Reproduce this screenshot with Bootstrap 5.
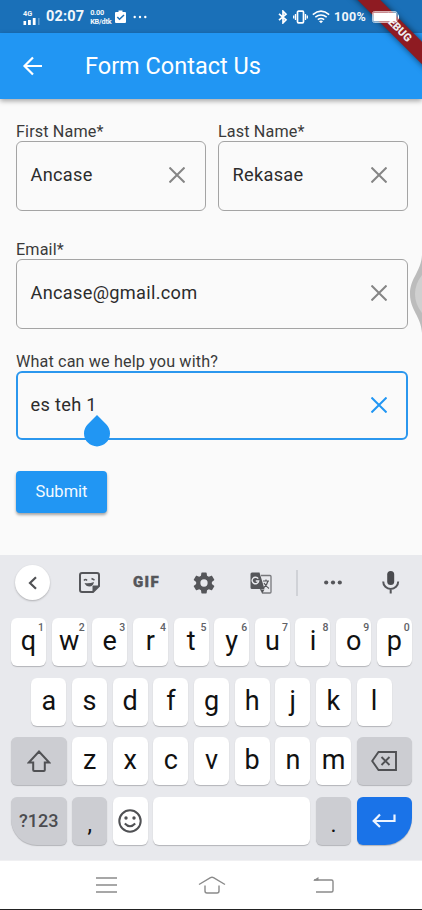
<!DOCTYPE html>
<html lang="en">
<head>
<meta charset="utf-8">
<meta name="viewport" content="width=device-width, initial-scale=1">
<title>Form Contact Us</title>
<link href="https://cdn.jsdelivr.net/npm/bootstrap@5.3.0/dist/css/bootstrap.min.css" rel="stylesheet">
<style>
html,body{height:100%}
body{font-family:Roboto,"Liberation Sans",sans-serif;background:#fafafa;color:#303030;overflow:hidden}
svg{display:block;flex:none}
.phone{width:422px;height:910px}
.status{height:33px;background:#1a70b8;color:#f2f7fb;padding-left:23px}
.status-icons{z-index:3;padding-right:22px}
.tiny{font-size:7.3px;line-height:9px;font-weight:700}
.signal{width:17px}
.speed{width:24px;margin-left:6px;white-space:nowrap;letter-spacing:-.2px}
.clock{font-size:14.5px;font-weight:700;line-height:17px;letter-spacing:.15px;margin-left:6px}
.pct{font-size:12.5px;font-weight:700;letter-spacing:.3px;width:38px;white-space:nowrap;padding-top:1px}
.ribbon-clip{top:0;right:0;width:90px;height:90px;z-index:2;pointer-events:none}
.ribbon{width:150px;height:16px;left:-9px;top:20.5px;transform:rotate(45deg);background:#8e1b22;color:#eee;font-size:11px;line-height:16px;font-weight:900;box-shadow:0 0 6px rgba(0,0,0,.6);padding-right:3px}
.appbar{height:66px;background:#2196f3;color:#fff;padding-left:21px;box-shadow:0 2px 5px rgba(0,0,0,.35);z-index:1}
.appbar-title{font-size:23.5px;line-height:28px;margin-left:40px;font-weight:400}
.form-area{height:456px;padding:24px 14px 0 16px}
.half{flex:1 1 0}
.name-row{gap:12px}
.flabel{font-size:16.2px;letter-spacing:.13px;line-height:18px;height:18px;color:#3a3a3a;white-space:nowrap}
.gap-email{margin-top:30px}
.gap-help{margin-top:24px}
.field{height:70px;border:1px solid #a4a4a4;border-radius:6px;padding:0 20px 2px 13.5px;font-size:18.2px;letter-spacing:.3px;color:#2c2c2c}
.field svg{stroke:#858585}
.field.active-field{border:2px solid #2b97ee;padding:0 19px 2px 12.5px;height:69px}
.active-field svg{stroke:#2196f3}
.drop{left:65.5px;top:42px}
.btn-send{width:91px;height:42px;margin-top:31px;background:#2196f3;color:#f4faff;font-size:16.5px;font-weight:400;border-radius:4px;box-shadow:0 2px 3px rgba(0,0,0,.35);border:0}
.edge{right:0;top:255px;z-index:2}
.keyboard{height:305px;background:#e8e9ed;padding:0 10px 0 11px}
.tools{height:55px;margin-bottom:8px}
.back-circle{width:35px;height:35px;box-shadow:0 1px 2px rgba(0,0,0,.25)}
.gif{font-size:15px;font-weight:900;color:#55565a;letter-spacing:1.4px;-webkit-text-stroke:.4px #55565a;margin-left:33px;width:29px}
.keys{gap:5.65px;height:48px;margin-bottom:11.6px}
.key{width:35px;height:48px;background:#fff;border-radius:6px;color:#111;font-size:27px;line-height:47px;box-shadow:0 1px 1px #b3b4b8;flex:none}
.key sup{position:absolute;right:2px;top:4px;font-size:10.5px;line-height:11px;font-weight:500;color:#606166}
.key-gray{background:#cccdd2}
.key-mod{width:55.5px}
.key-sym{border-bottom-left-radius:26px;font-size:18px;color:#4b4c50;font-weight:500}
.key-dot{font-size:23px}
.key-enter{background:#1a73e8;border-bottom-right-radius:27px}
.key-space{width:157px}
.navkeys{height:50px;background:#fff;border-bottom:1px solid #222;border-top:1px solid #f0f0f2}
</style>
</head>
<body>
<div class="phone d-flex flex-column position-relative overflow-hidden">
  <div class="status d-flex align-items-center justify-content-between">
    <div class="d-flex align-items-center">
      <div class="signal d-flex flex-column"><span class="tiny">4G</span>
        <svg width="17" height="7" fill="#fff"><rect x=".5" y="3" width="2.6" height="4"/><rect x="5" y="2" width="2.8" height="5"/><rect x="9.8" width="2.8" height="7"/><rect x="15" width="1.6" height="7" opacity=".3"/></svg>
      </div>
      <span class="clock pt-1 pb-1">02:07</span>
      <span class="tiny d-flex flex-column speed"><span>0.00</span><span>KB/dtk</span></span>
      <svg style="margin-left:1px" width="11" height="14" viewBox="0 0 11 14"><path fill="#fff" d="M1 2h2.500V.5h4V2H10q1 0 1 1v9q0 1-1 1H1q-1 0-1-1V3q0-1 1-1z"/><path d="M2.300 7l2.200 2.300L9 5" fill="none" stroke="#1a70b8" stroke-width="1.500"/></svg>
      <svg style="margin-left:7px" width="14" height="4" fill="#fff"><circle cx="1.700" cy="2" r="1.200"/><circle cx="7" cy="2" r="1.200"/><circle cx="12.300" cy="2" r="1.200"/></svg>
    </div>
    <div class="status-icons d-flex align-items-center position-relative">
      <svg width="10" height="14" viewBox="0 0 10 14" fill="none" stroke="#fff" stroke-width="1.700"><path d="M1 3.800l7 6L5 12.800V1.200l3 3-7 6"/></svg>
      <svg style="margin-left:5px" width="15" height="14" viewBox="0 0 15 14" fill="none" stroke="#fff" stroke-width="1.300"><rect x="4.500" y="1.200" width="6" height="11.600" rx="1" stroke-width="1.700"/><path d="M2.500 4v6M12.500 4v6M.7 5.600v2.800M14.300 5.600v2.800"/></svg>
      <svg style="margin-left:4px" width="18" height="14" viewBox="0 0 18 14" fill="none" stroke="#fff" stroke-width="1.500"><path d="M.8 4.600q8.200-7 16.400 0M3.300 7.200q5.700-4.600 11.400 0M5.800 9.700q3.200-2.400 6.400 0"/><path d="M9 13.300l-2-2.100q2-1.400 4 0z" fill="#fff" stroke="none"/></svg>
      <span class="pct ms-1">100%</span>
      <svg width="28" height="12" viewBox="0 0 28 12"><rect x=".5" y=".5" width="24.500" height="11" rx="2" fill="none" stroke="#fff" stroke-opacity=".65"/><rect x="1.300" y="1.500" width="23" height="9" rx="1" fill="#fff"/><path d="M26 3q2.200 3 0 6z" fill="#fff"/></svg>
    </div>
  </div>
  <div class="ribbon-clip position-absolute overflow-hidden"><div class="ribbon position-absolute text-center">DEBUG</div></div>

  <div class="appbar d-flex align-items-center position-relative">
    <svg width="24" height="24" viewBox="0 0 24 24" fill="none" stroke="#fff" stroke-width="2.200"><path d="M21 12H4M12 3.500L3.500 12l8.500 8.500"/></svg>
    <h1 class="appbar-title mb-0">Form Contact Us</h1>
  </div>

  <main class="form-area">
    <div class="name-row d-flex">
      <div class="half"><div class="flabel">First Name*</div>
        <div class="field d-flex align-items-center justify-content-between"><span>Ancase</span><svg width="16" height="16" fill="none" stroke-width="2"><path d="M.5.5l15 15m0-15l-15 15"/></svg></div></div>
      <div class="half"><div class="flabel">Last Name*</div>
        <div class="field d-flex align-items-center justify-content-between"><span>Rekasae</span><svg width="16" height="16" fill="none" stroke-width="2"><path d="M.5.5l15 15m0-15l-15 15"/></svg></div></div>
    </div>
    <div class="flabel gap-email">Email*</div>
    <div class="field d-flex align-items-center justify-content-between"><span>Ancase@gmail.com</span><svg width="16" height="16" fill="none" stroke-width="2"><path d="M.5.5l15 15m0-15l-15 15"/></svg></div>
    <div class="flabel gap-help">What can we help you with?</div>
    <div class="field active-field position-relative d-flex align-items-center justify-content-between"><span>es teh 1</span><svg width="16" height="16" fill="none" stroke-width="2"><path d="M.5.5l15 15m0-15l-15 15"/></svg>
      <svg class="drop position-absolute" width="26" height="32" viewBox="0 0 26 32"><path d="M13 0l9.200 9.200a13 13 0 1 1-18.400 0z" style="fill:#2196f3;stroke:none"/></svg></div>
    <button class="btn btn-send p-0 d-block">Submit</button>
  </main>
  <svg class="edge position-absolute" width="13" height="78" viewBox="0 0 13 78"><path fill="#bcbcbc" d="M13 0C12 17 1 23 1 39s11 22 12 39z"/><path fill="#d0d0d0" d="M13 20Q6 29 6 39t7 19z"/></svg>

  <section class="keyboard">
    <div class="tools d-flex align-items-center">
      <div class="back-circle bg-white rounded-circle d-flex align-items-center justify-content-center" style="margin-left:4px"><svg width="10" height="14" fill="none" stroke="#505154" stroke-width="2.200"><path d="M8 1.200L2 7l6 5.800"/></svg></div>
      <svg style="margin-left:29px" width="21" height="21" viewBox="0 0 21 21" fill="none" stroke="#55565a" stroke-width="2"><path d="M3 1h15q2 0 2 2v11l-6 6H3q-2 0-2-2V3q0-2 2-2z"/><path d="M14 20v-6h6z" fill="#55565a" stroke-width="1"/><path d="M5 8.500q1.500-2 3 0M12.500 6.500l3 1.500" stroke-width="1.500"/><path d="M5.500 11q4.500 1 9.500-1-1 4.500-4.500 4.500T5.500 11z" fill="#55565a" stroke="none"/></svg>
      <span class="gif">GIF</span>
      <svg style="margin-left:31px" width="22" height="22" viewBox="2 2 20 20" fill="#55565a"><path d="M19.140 12.940c.04-.3.060-.61.060-.94s-.02-.64-.07-.94l2.030-1.580a.49.49 0 0 0 .12-.61l-1.920-3.320a.49.49 0 0 0-.59-.22l-2.390.96a7 7 0 0 0-1.620-.94l-.36-2.540A.48.480 0 0 0 13.920 2.400h-3.840a.47.470 0 0 0-.47.410l-.36 2.540c-.59.240-1.130.570-1.620.94l-2.390-.96a.47.470 0 0 0-.59.220L2.740 8.870a.48.480 0 0 0 .12.610l2.030 1.580a7 7 0 0 0 0 1.880l-2.030 1.580a.49.490 0 0 0-.12.610l1.920 3.320c.12.220.37.290.59.220l2.390-.96c.5.380 1.030.7 1.620.94l.36 2.540c.05.240.24.410.48.410h3.840c.24 0 .44-.17.470-.41l.36-2.540a7 7 0 0 0 1.620-.94l2.390.96c.22.080.47 0 .59-.22l1.920-3.320a.47.470 0 0 0-.12-.61zM12 15.300a3.300 3.300 0 1 1 0-6.600 3.300 3.300 0 0 1 0 6.600z"/></svg>
      <svg style="margin-left:35px" width="22" height="22" viewBox="0 0 22 22" fill="none" stroke="#55565a"><path d="M11 3.500h9q1 0 1 1V20q0 1-1 1h-7.500L10 16" stroke="#77787c" stroke-width="1.300"/><path d="M2 .5h7.500l5 16.500H2q-1.500 0-1.500-1.500V2Q.5.500 2 .5zM10.500 17.500h4L12.500 21z" fill="#55565a" stroke="none"/><path d="M8.200 6.700A3.300 3.300 0 1 0 8.700 9H5.800" stroke="#e8e9ed" stroke-width="1.400"/><path d="M13 9h6M16 7.500V9M18 9q-1 4-4 6.500M14 11q2 3.500 5 5.500" stroke-width="1.200"/></svg>
      <svg style="margin-left:24px" width="2" height="26"><path d="M1 0v26" stroke="#c9cacf" stroke-width="1.500"/></svg>
      <svg style="margin-left:26px" width="18" height="5" fill="#55565a"><circle cx="2.200" cy="2.500" r="2.100"/><circle cx="9" cy="2.500" r="2.100"/><circle cx="15.800" cy="2.500" r="2.100"/></svg>
      <svg style="margin-left:40px" width="18" height="23" viewBox="0 0 18 23"><rect x="5.200" width="7" height="14" rx="3.500" fill="#4a4b4f"/><path d="M1.200 10.500a7.500 7.500 0 0 0 15 0M8.700 18v4.500" fill="none" stroke="#55565a" stroke-width="2"/></svg>
    </div>
    <div class="keys d-flex">
      <div class="key position-relative text-center">q<sup>1</sup></div><div class="key position-relative text-center">w<sup>2</sup></div><div class="key position-relative text-center">e<sup>3</sup></div><div class="key position-relative text-center">r<sup>4</sup></div><div class="key position-relative text-center">t<sup>5</sup></div><div class="key position-relative text-center">y<sup>6</sup></div><div class="key position-relative text-center">u<sup>7</sup></div><div class="key position-relative text-center">i<sup>8</sup></div><div class="key position-relative text-center">o<sup>9</sup></div><div class="key position-relative text-center">p<sup>0</sup></div>
    </div>
    <div class="keys d-flex justify-content-center">
      <div class="key text-center">a</div><div class="key text-center">s</div><div class="key text-center">d</div><div class="key text-center">f</div><div class="key text-center">g</div><div class="key text-center">h</div><div class="key text-center">j</div><div class="key text-center">k</div><div class="key text-center">l</div>
    </div>
    <div class="keys d-flex">
      <div class="key key-gray key-mod d-flex align-items-center justify-content-center"><svg width="24" height="23" viewBox="0 0 24 23" fill="none" stroke="#505154" stroke-width="2"><path d="M12 1.500L1.800 12.500h4.400V20q0 1 1 1h9.600q1 0 1-1v-7.500h4.400z"/></svg></div>
      <div class="key text-center">z</div><div class="key text-center">x</div><div class="key text-center">c</div><div class="key text-center">v</div><div class="key text-center">b</div><div class="key text-center">n</div><div class="key text-center">m</div>
      <div class="key key-gray key-mod d-flex align-items-center justify-content-center"><svg width="26" height="20" viewBox="0 0 26 20" fill="none" stroke="#505154" stroke-width="1.900"><path d="M7.500 1H25v18H7.500L1.200 10z"/><path d="M10.500 6l8 8m0-8l-8 8"/></svg></div>
    </div>
    <div class="keys d-flex mb-0">
      <div class="key key-gray key-mod key-sym d-flex align-items-center justify-content-center">?123</div>
      <div class="key key-gray key-dot text-center pt-1">,</div>
      <div class="key d-flex align-items-center justify-content-center"><svg width="24" height="24" viewBox="0 0 24 24" fill="none" stroke="#505154" stroke-width="2"><circle cx="12" cy="12" r="10.700"/><path d="M6.800 14.500q5.200 5.500 10.400 0"/><circle cx="8" cy="9" r="1.700" fill="#505154" stroke="none"/><circle cx="16" cy="9" r="1.700" fill="#505154" stroke="none"/></svg></div>
      <div class="key key-space"></div>
      <div class="key key-gray key-dot text-center pt-1">.</div>
      <div class="key key-enter key-mod d-flex align-items-center justify-content-center"><svg width="24" height="15" viewBox="0 0 24 15" fill="none" stroke="#eef5ff" stroke-width="2.200"><path d="M22.500 1.500V8H2.500M8 1.500L1.700 8 8 14"/></svg></div>
    </div>
  </section>

  <nav class="navkeys d-flex align-items-center">
    <svg style="margin-left:96px" width="21" height="16" stroke="#8a8a8a" stroke-width="1.400"><path d="M0 1h21M0 8h21M0 15h21"/></svg>
    <svg style="margin-left:81px" width="28" height="18" viewBox="0 0 28 18" fill="none" stroke="#8a8a8a" stroke-width="1.400"><path d="M1 8.500L12.500 1.700q1.500-.8 3 0L27 8.500M7 9.500V15q0 2 2 2h10q2 0 2-2V9.500"/></svg>
    <svg style="margin-left:87px" width="21" height="16" viewBox="0 0 21 16" fill="none" stroke="#8a8a8a" stroke-width="1.400"><path d="M1 3h17.500q1.500 0 1.500 1.500v9q0 1.500-1.500 1.500H3"/><path d="M0 3.500L5.500 0v3.500z" fill="#8a8a8a" stroke="none"/></svg>
  </nav>
</div>
<script src="https://cdn.jsdelivr.net/npm/bootstrap@5.3.0/dist/js/bootstrap.bundle.min.js"></script>
</body>
</html>
